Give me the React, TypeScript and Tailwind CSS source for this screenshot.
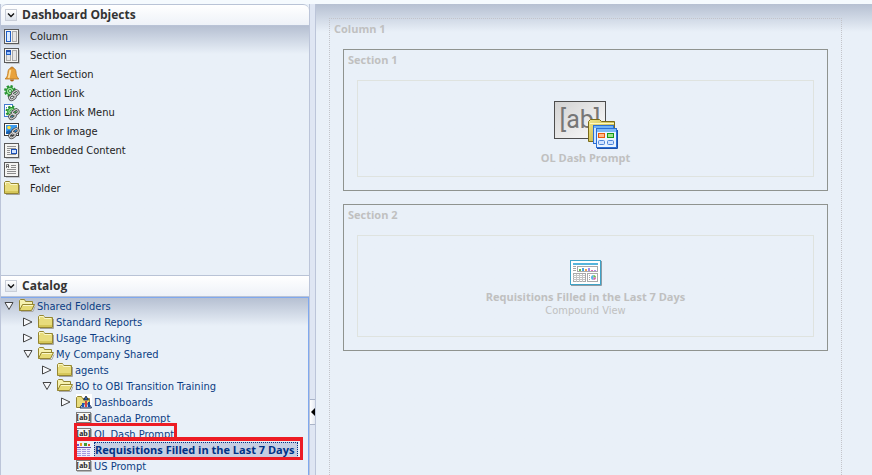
import type { ReactNode } from "react";

function Svg({ w = 16, h = 16, children }: { w?: number; h?: number; children: ReactNode }) {
  return (
    <svg width={w} height={h} viewBox={`0 0 ${w} ${h}`} className="block shrink-0 overflow-visible" aria-hidden="true">
      {children}
    </svg>
  );
}

/* ---------- icons ---------- */

function PageFrame() {
  return (
    <>
      <path d="M2 16.500h13.500V3" fill="none" stroke="#c4c8cc" />
      <rect x="0.500" y="1.500" width="14" height="14" fill="#f4f4f2" stroke="#5a5a5a" />
    </>
  );
}

function ColumnIcon() {
  return (
    <Svg>
      <PageFrame />
      <rect x="2.500" y="3.500" width="4" height="10" fill="#dcecff" stroke="#1f5fc8" />
      <rect x="8.500" y="3.500" width="4" height="10" fill="#e6e6e6" stroke="#a9a9a9" />
    </Svg>
  );
}

function SectionIcon() {
  return (
    <Svg>
      <PageFrame />
      <rect x="2.500" y="3.500" width="4" height="10" fill="#e6e6e6" stroke="#a9a9a9" />
      <rect x="8.500" y="3.500" width="4" height="10" fill="#e6e6e6" stroke="#a9a9a9" />
      <rect x="2.500" y="3.500" width="4" height="4" fill="#9cc4ff" stroke="#1f5fc8" />
      <path d="M2 4h5" stroke="#1f4fb0" strokeWidth="2" />
    </Svg>
  );
}

function BellIcon() {
  return (
    <Svg>
      <circle cx="8" cy="2.500" r="1.500" fill="#f0a63a" stroke="#b8701a" strokeWidth="0.800" />
      <path d="M8 2c-3.600 0-4 2.500-4.200 5.700C3.600 10 2.500 11.500 1.200 13h13.600C13.500 11.500 12.400 10 12.200 7.700 12 4.500 11.600 2 8 2z" fill="#e9a23c" stroke="#b8741e" strokeWidth="0.800" />
      <path d="M6.500 4C5.500 6 5.800 9.500 4.500 12" stroke="#ffe0a0" strokeWidth="1.800" fill="none" />
      <path d="M6 13.500h4a2 2 0 0 1-4 0z" fill="#a85f12" />
    </Svg>
  );
}

function ChainLinks() {
  return (
    <g fill="none" stroke="#4a4a4a" strokeWidth="2.600">
      <rect x="8.500" y="6.500" width="6" height="4" rx="2" transform="rotate(-35 11 8.500)" />
      <rect x="5.500" y="10.500" width="6" height="4" rx="2" transform="rotate(-35 8 12.500)" />
      <g stroke="#d8d8d8" strokeWidth="1">
        <rect x="8.500" y="6.500" width="6" height="4" rx="2" transform="rotate(-35 11 8.500)" />
        <rect x="5.500" y="10.500" width="6" height="4" rx="2" transform="rotate(-35 8 12.500)" />
      </g>
    </g>
  );
}

function Gear({ x, y }: { x: number; y: number }) {
  return (
    <g transform={`translate(${x} ${y})`}>
      <circle r="5" fill="none" stroke="#279331" strokeWidth="2" strokeDasharray="2.200 1.727" />
      <circle r="3.800" fill="#9be096" stroke="#279331" strokeWidth="1.200" />
      <circle r="1.500" fill="#eef6ff" stroke="#279331" />
    </g>
  );
}

function ActionLinkIcon() {
  return (
    <Svg>
      <Gear x={6} y={6} />
      <ChainLinks />
    </Svg>
  );
}

function ActionLinkMenuIcon() {
  return (
    <Svg>
      <rect x="0.500" y="0.500" width="8" height="12" fill="#fff" stroke="#4379cf" />
      <path d="M2 3.500h1M2 6.500h1M2 9.500h1M4 3.500h3" stroke="#4379cf" />
      <Gear x={7.5} y={7.5} />
      <ChainLinks />
    </Svg>
  );
}

function LinkImageIcon() {
  return (
    <Svg>
      <rect x="0.500" y="0.500" width="14" height="12" fill="#fff" stroke="#3a3a3a" />
      <rect x="2" y="2" width="11" height="9" fill="#3a9bef" />
      <path d="M2 11V9l3-2 3 2 5-1v3z" fill="#1860b0" />
      <circle cx="5" cy="4.500" r="1.800" fill="#ffdf3d" />
      <ChainLinks />
    </Svg>
  );
}

function EmbeddedIcon() {
  return (
    <Svg>
      <PageFrame />
      <path d="M3 4.500h9M3 6.500h9M3 8.500h3M3 10.500h3M3 12.500h9" stroke="#929292" />
      <rect x="7.500" y="7.500" width="5" height="4" fill="#cfe2ff" stroke="#1c4fb4" />
    </Svg>
  );
}

function TextIcon() {
  return (
    <Svg>
      <PageFrame />
      <path d="M2.500 7V3.500h2V7M2 5.500h3" stroke="#555" fill="none" strokeWidth="0.800" />
      <path d="M7 4.500h5M7 6.500h5M3 8.500h9M3 10.500h9M3 12.500h9" stroke="#8c8c8c" />
    </Svg>
  );
}

function FolderIcon() {
  return (
    <Svg>
      <path d="M2 14.500h13.500V5" fill="none" stroke="#a3a3a3" />
      <path d="M0.500 13.500v-11l1-1h4l1 2h8v10z" fill="#e8dc7c" stroke="#958631" />
      <path d="M1.500 5V2.500h4l1 2H13" fill="none" stroke="#fbf7c8" />
      <path d="M1 11h13v2H1z" fill="#d6c75a" />
    </Svg>
  );
}

function OpenFolderIcon() {
  return (
    <Svg>
      <path d="M2 13.500h12l2-5" fill="none" stroke="#aaa" />
      <path d="M0.500 12.500V2.500l1-1h4l1 2h7v4" fill="#f6f1b0" stroke="#958631" />
      <path d="M0.500 12.500l3-6h12l-3 6z" fill="#e6da74" stroke="#958631" />
      <path d="M4 7.500h10" stroke="#fbf7c8" />
    </Svg>
  );
}

function DashboardsIcon() {
  return (
    <Svg>
      <rect width="16" height="16" fill="#fff" />
      <path d="M0.500 13.500v-10l1-1h4l1 2h7v9z" fill="#e8dc7c" stroke="#958631" />
      <path d="M4 14a6 6 0 0 1 11.500 0z" fill="#bcd0ea" stroke="#20345c" />
      <path d="M10 2L7.500 6h5z" fill="#2b62b8" stroke="#222" strokeWidth="0.800" />
      <rect x="6" y="9" width="2" height="4" fill="#1d55b8" />
      <rect x="9" y="7" width="2" height="6" fill="#d8443c" />
      <rect x="12" y="8" width="2" height="5" fill="#1746a0" />
    </Svg>
  );
}

function PromptIcon() {
  return (
    <Svg>
      <path d="M1 13.500h14.500V3" fill="none" stroke="#b5b5b5" />
      <rect x="0.500" y="2.500" width="14" height="10" fill="#f8f8f6" stroke="#7d7d7d" />
      <text x="7.500" y="10" textAnchor="middle" fontSize="8" fontWeight="bold" fontFamily="Liberation Serif, serif" fill="#222">
        [ab]
      </text>
    </Svg>
  );
}

function AnalysisIcon() {
  return (
    <Svg>
      <rect x="0" y="1" width="15" height="14" fill="#efeafa" />
      <rect x="1" y="2" width="2" height="2" fill="#6a55c8" />
      <rect x="4" y="1" width="2" height="3" fill="#e89a1c" />
      <rect x="8" y="1" width="3" height="3" fill="#3e9a35" />
      <rect x="12" y="2" width="2" height="2" fill="#e0571f" />
      <path d="M0 5.500h15" stroke="#5d4ba8" />
      <path d="M1 7.500h4M6 7.500h4M11 7.500h3M1 9.500h4M6 9.500h4M11 9.500h3M1 11.500h4M6 11.500h4M11 11.500h3M1 13.500h4M6 13.500h4M11 13.500h3" stroke="#a397de" />
    </Svg>
  );
}

function PromptLargeIcon() {
  return (
    <Svg w={63} h={48}>
      <defs>
        <linearGradient id="promptFill" x1="0" y1="0" x2="1" y2="1">
          <stop offset="0" stopColor="#d2d2d2" />
          <stop offset="1" stopColor="#fdfdfd" />
        </linearGradient>
        <linearGradient id="folderFill" x1="0" y1="0" x2="1" y2="1">
          <stop offset="0" stopColor="#f0e68c" />
          <stop offset="1" stopColor="#b9a52c" />
        </linearGradient>
      </defs>
      <rect x="0.500" y="0.500" width="51" height="37" fill="url(#promptFill)" stroke="#4d4d4d" />
      <text x="26" y="27" textAnchor="middle" fontSize="25" fontFamily="Roboto, sans-serif" fill="#777">
        [ab]
      </text>
      <path d="M34.500 40.500V20.500l2-2h9l2 2h13v20z" fill="url(#folderFill)" stroke="#7a6a18" />
      <path d="M36 22.500h24" stroke="#fdf8c0" />
      <rect x="39.500" y="24.500" width="20" height="18" fill="#cfe4ff" stroke="#2a6fd6" />
      <path d="M40 26h19" stroke="#6fb2f5" strokeWidth="2" />
      <path d="M43 47.500h20.500V29" stroke="#1d4fa8" fill="none" />
      <rect x="42.500" y="27.500" width="20" height="19" fill="#eaf4ff" stroke="#2a6fd6" />
      <path d="M43 29.500h19" stroke="#7db9f6" strokeWidth="3" />
      <rect x="44.500" y="32.500" width="6" height="4" fill="#ffb98a" stroke="#e8590c" />
      <rect x="53.500" y="32.500" width="6" height="4" fill="#9fe08a" stroke="#159a1a" />
      <rect x="44.500" y="39.500" width="6" height="4" rx="1" fill="#cfe2ff" stroke="#4d85d8" />
      <rect x="53.500" y="39.500" width="6" height="4" rx="1" fill="#cfe2ff" stroke="#4d85d8" />
    </Svg>
  );
}

function CompoundViewIcon() {
  return (
    <Svg w={31} h={26}>
      <path d="M1 25.500h30.500V1" fill="none" stroke="#8f9ba3" />
      <rect x="0.500" y="0.500" width="30" height="24" fill="#fff" stroke="#3fa3c8" />
      <rect x="3" y="3" width="25" height="2" fill="#55b4dc" />
      <path d="M3 6.500h3M3 8.500h3M3 10.500h3" stroke="#a5a5a5" />
      <rect x="7.500" y="6.500" width="20" height="5" fill="#fff" stroke="#a9a9a9" />
      <rect x="9" y="9" width="2" height="2" fill="#6cc24a" />
      <rect x="12" y="8" width="2" height="3" fill="#4da6e0" />
      <rect x="15" y="9" width="2" height="2" fill="#f0a050" />
      <rect x="18" y="8" width="2" height="3" fill="#a08af0" />
      <rect x="21" y="10" width="2" height="1" fill="#e070b0" />
      <rect x="24" y="10" width="2" height="1" fill="#b48af0" />
      <rect x="3.500" y="13.500" width="12" height="8" fill="#fff" stroke="#a9a9a9" />
      <path d="M3 15.500h12M3 17.500h12M3 19.500h12M6.500 14v8M9.500 14v8M12.500 14v8" stroke="#c4c4c4" />
      <rect x="17.500" y="13.500" width="10" height="8" fill="#fff" stroke="#a9a9a9" />
      <path d="M19.500 15v1M19.500 17v1M19.500 19v1" stroke="#a5a5a5" />
      <path d="M23.500 17.500V15a2.500 2.500 0 0 0 0 5z" fill="#5ab4e8" />
      <path d="M23.500 15a2.500 2.500 0 0 1 2.500 2.500h-2.500z" fill="#6cc24a" />
      <path d="M23.500 20a2.500 2.500 0 0 0 2.500-2.500h-2.500z" fill="#e060a8" />
    </Svg>
  );
}

/* ---------- data ---------- */

const objects = [
  { label: "Column", Icon: ColumnIcon },
  { label: "Section", Icon: SectionIcon },
  { label: "Alert Section", Icon: BellIcon },
  { label: "Action Link", Icon: ActionLinkIcon },
  { label: "Action Link Menu", Icon: ActionLinkMenuIcon },
  { label: "Link or Image", Icon: LinkImageIcon },
  { label: "Embedded Content", Icon: EmbeddedIcon },
  { label: "Text", Icon: TextIcon },
  { label: "Folder", Icon: FolderIcon },
];

type Node = {
  label: string;
  indent: string;
  Icon: () => ReactNode;
  open?: boolean;
  selected?: boolean;
  mark?: string;
};

const nodes: Node[] = [
  { label: "Shared Folders", indent: "pl-[3px]", Icon: OpenFolderIcon, open: true },
  { label: "Standard Reports", indent: "pl-[22px]", Icon: FolderIcon, open: false },
  { label: "Usage Tracking", indent: "pl-[22px]", Icon: FolderIcon, open: false },
  { label: "My Company Shared", indent: "pl-[22px]", Icon: OpenFolderIcon, open: true },
  { label: "agents", indent: "pl-[41px]", Icon: FolderIcon, open: false },
  { label: "BO to OBI Transition Training", indent: "pl-[41px]", Icon: OpenFolderIcon, open: true },
  { label: "Dashboards", indent: "pl-[60px]", Icon: DashboardsIcon, open: false },
  { label: "Canada Prompt", indent: "pl-[60px]", Icon: PromptIcon },
  {
    label: "OL Dash Prompt",
    indent: "pl-[60px]",
    Icon: PromptIcon,
    mark: "left-[73px] -top-[3px] h-[18px] w-[103px]",
  },
  {
    label: "Requisitions Filled in the Last 7 Days",
    indent: "pl-[60px]",
    Icon: AnalysisIcon,
    selected: true,
    mark: "left-[73px] -top-[5px] h-[23px] w-[229px] border-t-4",
  },
  { label: "US Prompt", indent: "pl-[60px]", Icon: PromptIcon },
  { label: "", indent: "pl-[41px]", Icon: FolderIcon },
];

/* ---------- parts ---------- */

function PanelHeader({ title, className = "" }: { title: string; className?: string }) {
  return (
    <div
      className={`flex h-[22px] shrink-0 items-center gap-1 border-t border-b border-[#b9c3d6] bg-linear-to-b from-white to-[#eef2f8] pl-1 ${className}`}
    >
      <button
        type="button"
        aria-label={`Collapse ${title}`}
        className="flex h-3 w-3 items-center justify-center border border-[#c9ced8] bg-linear-to-b from-white to-[#dde3ec]"
      >
        <svg width="8" height="5" viewBox="0 0 8 5" aria-hidden="true">
          <path d="M1 0.500l3 3 3-3" fill="none" stroke="#111" strokeWidth="1.400" />
        </svg>
      </button>
      <h2 className="pl-px font-['Open_Sans',sans-serif] text-xs font-bold text-[#333]">{title}</h2>
    </div>
  );
}

function Expander({ open, label }: { open: boolean; label: string }) {
  return (
    <button type="button" aria-expanded={open} aria-label={`Toggle ${label}`} className="w-[10px] shrink-0">
      <svg width="10" height="10" viewBox="0 0 10 10" aria-hidden="true">
        <path d={open ? "M1 1.500h8L5 8.500z" : "M0.500 1v8L9 5z"} fill="#f6f8fb" stroke="#444" />
      </svg>
    </button>
  );
}

function TreeRow({ node }: { node: Node }) {
  const { label, indent, Icon, open, selected, mark } = node;
  return (
    <li className={`relative flex h-4 items-center ${indent}`}>
      {open === undefined ? <span className="w-[10px] shrink-0" /> : <Expander open={open} label={label} />}
      <span className="w-[5px] shrink-0" />
      <Icon />
      {label && (
        <a
          href="#"
          className={
            selected
              ? "ml-[2px] border border-dotted border-[#003286] bg-[#c5cee2] pr-[3px] font-['Open_Sans',sans-serif] font-bold leading-[14px] text-[#003286]"
              : "ml-[2px] pt-[2px] leading-[14px] text-[#0b3d83]"
          }
        >
          {label}
        </a>
      )}
      {mark && <span className={`pointer-events-none absolute z-10 border-3 border-[#ed1c24] ${mark}`} />}
    </li>
  );
}

function Section({ title, children }: { title: string; children: ReactNode }) {
  return (
    <section className="border border-[#8f938f] px-[13px] pb-[13px]">
      <h3 className="-ml-[9px] h-[30px] pt-[2px] font-['Open_Sans',sans-serif] font-bold leading-4">{title}</h3>
      <div className="border border-[#dfe3df]">{children}</div>
    </section>
  );
}

export default function App() {
  return (
    <div className="flex h-screen overflow-hidden bg-[#f5fafe] pt-1 font-['DejaVu_Sans_Condensed','Open_Sans',sans-serif] text-[11px] whitespace-nowrap">
      <aside className="flex w-[310px] shrink-0 flex-col border-x border-[#bcc5d9] bg-[#e9f0f8]">
        <PanelHeader title="Dashboard Objects" className="rounded-t-md" />
        <ul className="h-[249px] shrink-0 bg-linear-to-b from-[#b6c0d2] to-[#e9f0f8] to-[28px] pt-px">
          {objects.map(({ label, Icon }) => (
            <li key={label} className="flex h-[19px] items-start gap-[10px] pt-px pl-[3px] text-[#222]">
              <Icon />
              <span className="leading-[18px]">{label}</span>
            </li>
          ))}
        </ul>
        <PanelHeader title="Catalog" />
        <ul className="min-h-0 flex-1 overflow-hidden border-t border-r border-[#7fa8ee] bg-linear-to-b from-[#b6c0d2] to-[#e9f0f8] to-[28px]">
          {nodes.map((node, i) => (
            <TreeRow key={i} node={node} />
          ))}
        </ul>
      </aside>

      <div className="w-[6px] shrink-0 border-r border-[#bcc5d9] bg-[#dfe6f3] pt-[395px]">
        <button
          type="button"
          aria-label="Collapse panel"
          className="flex h-[26px] w-[5px] items-center justify-center border-y border-[#aab4c8] bg-linear-to-r from-white to-[#e4e9f2]"
        >
          <svg width="4" height="8" viewBox="0 0 4 8" aria-hidden="true">
            <path d="M4 0v8L0 4z" fill="#000" />
          </svg>
        </button>
      </div>

      <main className="flex min-w-0 flex-1 bg-[#e9f0f8] bg-linear-to-b from-[#b6c0d2] to-[#e9f0f8] to-[28px] pt-[14px] pr-[30px] pl-[13px] text-[#c0c0c0]">
        <div className="min-w-0 flex-1 border-x border-t border-dotted border-[#c3c4ca] px-[13px]">
          <h2 className="-ml-[9px] h-[30px] pt-[2px] font-['Open_Sans',sans-serif] font-bold leading-4">Column 1</h2>
          <div className="flex flex-col gap-[13px]">
            <Section title="Section 1">
              <div className="flex flex-col items-center pt-5 pb-[9px]">
                <PromptLargeIcon />
                <p className="font-['Open_Sans',sans-serif] font-bold leading-[18px]">OL Dash Prompt</p>
              </div>
            </Section>
            <Section title="Section 2">
              <div className="flex flex-col items-center pt-6 pb-[18px]">
                <CompoundViewIcon />
                <p className="mt-1 font-['Open_Sans',sans-serif] font-bold leading-[13px]">
                  Requisitions Filled in the Last 7 Days
                </p>
                <p className="leading-[15px]">Compound View</p>
              </div>
            </Section>
          </div>
        </div>
      </main>
    </div>
  );
}
